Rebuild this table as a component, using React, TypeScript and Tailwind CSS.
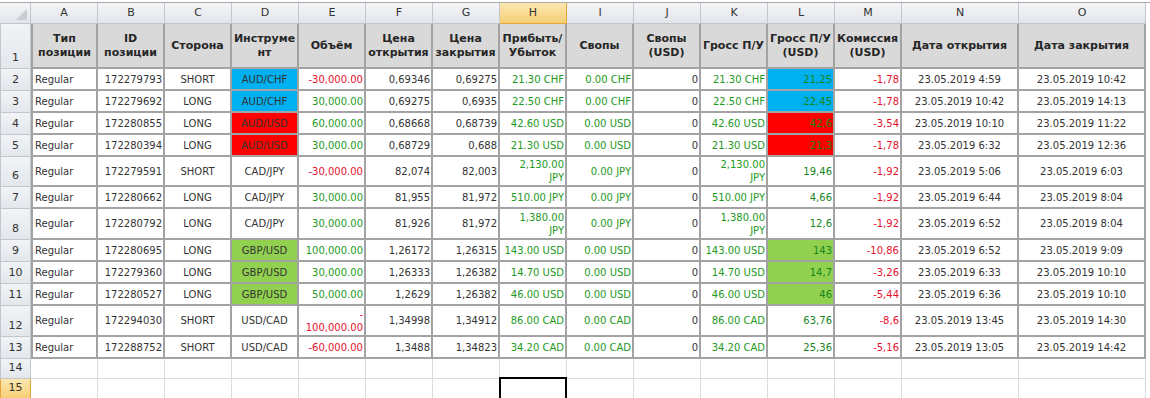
import { Fragment } from 'react';

type Row = {
  n: number;
  cells: string[];
  fill?: 'blue' | 'red' | 'green';
};

const letters = ['A', 'B', 'C', 'D', 'E', 'F', 'G', 'H', 'I', 'J', 'K', 'L', 'M', 'N', 'O'];

const headers = [
  'Тип\nпозиции',
  'ID\nпозиции',
  'Сторона',
  'Инструме\nнт',
  'Объём',
  'Цена\nоткрытия',
  'Цена\nзакрытия',
  'Прибыть/\nУбыток',
  'Свопы',
  'Свопы\n(USD)',
  'Гросс П/У',
  'Гросс П/У\n(USD)',
  'Комиссия\n(USD)',
  'Дата открытия',
  'Дата закрытия',
];

const rows: Row[] = [
  { n: 2, fill: 'blue', cells: ['Regular', '172279793', 'SHORT', 'AUD/CHF', '-30,000.00', '0,69346', '0,69275', '21.30 CHF', '0.00 CHF', '0', '21.30 CHF', '21,25', '-1,78', '23.05.2019 4:59', '23.05.2019 10:42'] },
  { n: 3, fill: 'blue', cells: ['Regular', '172279692', 'LONG', 'AUD/CHF', '30,000.00', '0,69275', '0,6935', '22.50 CHF', '0.00 CHF', '0', '22.50 CHF', '22,45', '-1,78', '23.05.2019 10:42', '23.05.2019 14:13'] },
  { n: 4, fill: 'red', cells: ['Regular', '172280855', 'LONG', 'AUD/USD', '60,000.00', '0,68668', '0,68739', '42.60 USD', '0.00 USD', '0', '42.60 USD', '42,6', '-3,54', '23.05.2019 10:10', '23.05.2019 11:22'] },
  { n: 5, fill: 'red', cells: ['Regular', '172280394', 'LONG', 'AUD/USD', '30,000.00', '0,68729', '0,688', '21.30 USD', '0.00 USD', '0', '21.30 USD', '21,3', '-1,78', '23.05.2019 6:32', '23.05.2019 12:36'] },
  { n: 6, cells: ['Regular', '172279591', 'SHORT', 'CAD/JPY', '-30,000.00', '82,074', '82,003', '2,130.00\nJPY', '0.00 JPY', '0', '2,130.00\nJPY', '19,46', '-1,92', '23.05.2019 5:06', '23.05.2019 6:03'] },
  { n: 7, cells: ['Regular', '172280662', 'LONG', 'CAD/JPY', '30,000.00', '81,955', '81,972', '510.00 JPY', '0.00 JPY', '0', '510.00 JPY', '4,66', '-1,92', '23.05.2019 6:44', '23.05.2019 8:04'] },
  { n: 8, cells: ['Regular', '172280792', 'LONG', 'CAD/JPY', '30,000.00', '81,926', '81,972', '1,380.00\nJPY', '0.00 JPY', '0', '1,380.00\nJPY', '12,6', '-1,92', '23.05.2019 6:52', '23.05.2019 8:04'] },
  { n: 9, fill: 'green', cells: ['Regular', '172280695', 'LONG', 'GBP/USD', '100,000.00', '1,26172', '1,26315', '143.00 USD', '0.00 USD', '0', '143.00 USD', '143', '-10,86', '23.05.2019 6:52', '23.05.2019 9:09'] },
  { n: 10, fill: 'green', cells: ['Regular', '172279360', 'LONG', 'GBP/USD', '30,000.00', '1,26333', '1,26382', '14.70 USD', '0.00 USD', '0', '14.70 USD', '14,7', '-3,26', '23.05.2019 6:33', '23.05.2019 10:10'] },
  { n: 11, fill: 'green', cells: ['Regular', '172280527', 'LONG', 'GBP/USD', '50,000.00', '1,2629', '1,26382', '46.00 USD', '0.00 USD', '0', '46.00 USD', '46', '-5,44', '23.05.2019 6:36', '23.05.2019 10:10'] },
  { n: 12, cells: ['Regular', '172294030', 'SHORT', 'USD/CAD', '-\n100,000.00', '1,34998', '1,34912', '86.00 CAD', '0.00 CAD', '0', '86.00 CAD', '63,76', '-8,6', '23.05.2019 13:45', '23.05.2019 14:30'] },
  { n: 13, cells: ['Regular', '172288752', 'SHORT', 'USD/CAD', '-60,000.00', '1,3488', '1,34823', '34.20 CAD', '0.00 CAD', '0', '34.20 CAD', '25,36', '-5,16', '23.05.2019 13:05', '23.05.2019 14:42'] },
];

// A left, C/D/N/O centered, everything else right
const alignOf = (i: number) => {
  if (i === 0) return 'justify-start text-left pl-[2px]';
  if (i === 2 || i === 3 || i === 13 || i === 14) return 'justify-center text-center';
  return 'justify-end text-right pr-[1px]';
};

const fillClass = {
  blue: 'bg-[#00b0f0]',
  red: 'bg-[#ff0000]',
  green: 'bg-[#92d050]',
};

const colorOf = (i: number, v: string) => {
  if (i === 4) return v.startsWith('-') ? 'text-[#e8112d]' : 'text-[#1e9a1e]';
  if (i === 7 || i === 8 || i === 10) return 'text-[#1e9a1e]';
  if (i === 11) return 'text-[#17861a]';
  if (i === 12) return 'text-[#e8112d]';
  return 'text-[#333333]';
};

const headCell = 'flex items-center justify-center border-b border-r border-[#c3c7cd] bg-linear-to-b from-[#f4f5f7] to-[#e2e5ea] text-[11px] text-[#333]';
const goldCell = 'flex items-center justify-center border-b border-r border-[#e3a53c] bg-linear-to-b from-[#fce7b0] to-[#f6cf74] text-[11px] text-[#333]';
const rowHead = 'flex items-end justify-center pb-[2px] border-b border-r border-l border-[#c3c7cd] bg-linear-to-b from-[#f1f3f6] to-[#e3e7ec] text-[11px] text-[#333]';

export default function App() {
  return (
    <div className="h-[398px] w-[1150px] overflow-hidden bg-white font-['DejaVu_Sans',sans-serif]">
      <div className="h-[3px] border-b border-[#a8a8a8] bg-white" />
      <div className="grid grid-cols-[31px_repeat(13,67px)_117px_127px] grid-rows-[21px_45px_22px_22px_22px_22px_30px_22px_31px_22px_22px_22px_31px_22px_20px_20px]">
        {/* column letters */}
        <div className={headCell + ' relative'}>
          <svg className="absolute bottom-[3px] right-[3px]" width="11" height="11" viewBox="0 0 11 11">
            <polygon points="11,0 11,11 0,11" fill="#c9ccd1" />
          </svg>
        </div>
        {letters.map((l) => (
          <div key={l} className={l === 'H' ? goldCell : headCell}>{l}</div>
        ))}

        {/* header row 1 */}
        <div className={rowHead}>1</div>
        {headers.map((h, i) => (
          <div
            key={h}
            className={
              'flex items-center justify-center whitespace-pre-line border-b-2 border-r-2 border-[#a3a3a3] bg-[#d9d9d9] text-center text-[11px] font-bold leading-[14px] text-[#262626]' +
              (i === 0 ? ' border-l-2' : '')
            }
          >
            {h}
          </div>
        ))}

        {/* data rows */}
        {rows.map((r) => (
          <Fragment key={r.n}>
            <div className={rowHead}>{r.n}</div>
            {r.cells.map((v, i) => (
              <div
                key={i}
                className={[
                  'flex items-center whitespace-pre-line border-b-2 border-r-2 border-[#a3a3a3] text-[10px] leading-[13px]',
                  i === 0 ? 'border-l-2' : '',
                  alignOf(i),
                  colorOf(i, v),
                  r.fill && (i === 3 || i === 11) ? fillClass[r.fill] : 'bg-white',
                ].join(' ')}
              >
                {v}
              </div>
            ))}
          </Fragment>
        ))}

        {/* empty rows 14, 15 */}
        {[14, 15].map((n) => (
          <Fragment key={n}>
            <div className={n === 15 ? goldCell.replace('items-center', 'items-end pb-[2px]') + ' border-l' : rowHead}>{n}</div>
            {letters.map((l) => (
              <div key={l} className="relative border-b border-r border-[#dadcdd] bg-white">
                {n === 15 && l === 'H' && (
                  <div className="absolute -left-[1px] -top-[2px] h-[24px] w-[68px] border-2 border-black" />
                )}
              </div>
            ))}
          </Fragment>
        ))}
      </div>
    </div>
  );
}
